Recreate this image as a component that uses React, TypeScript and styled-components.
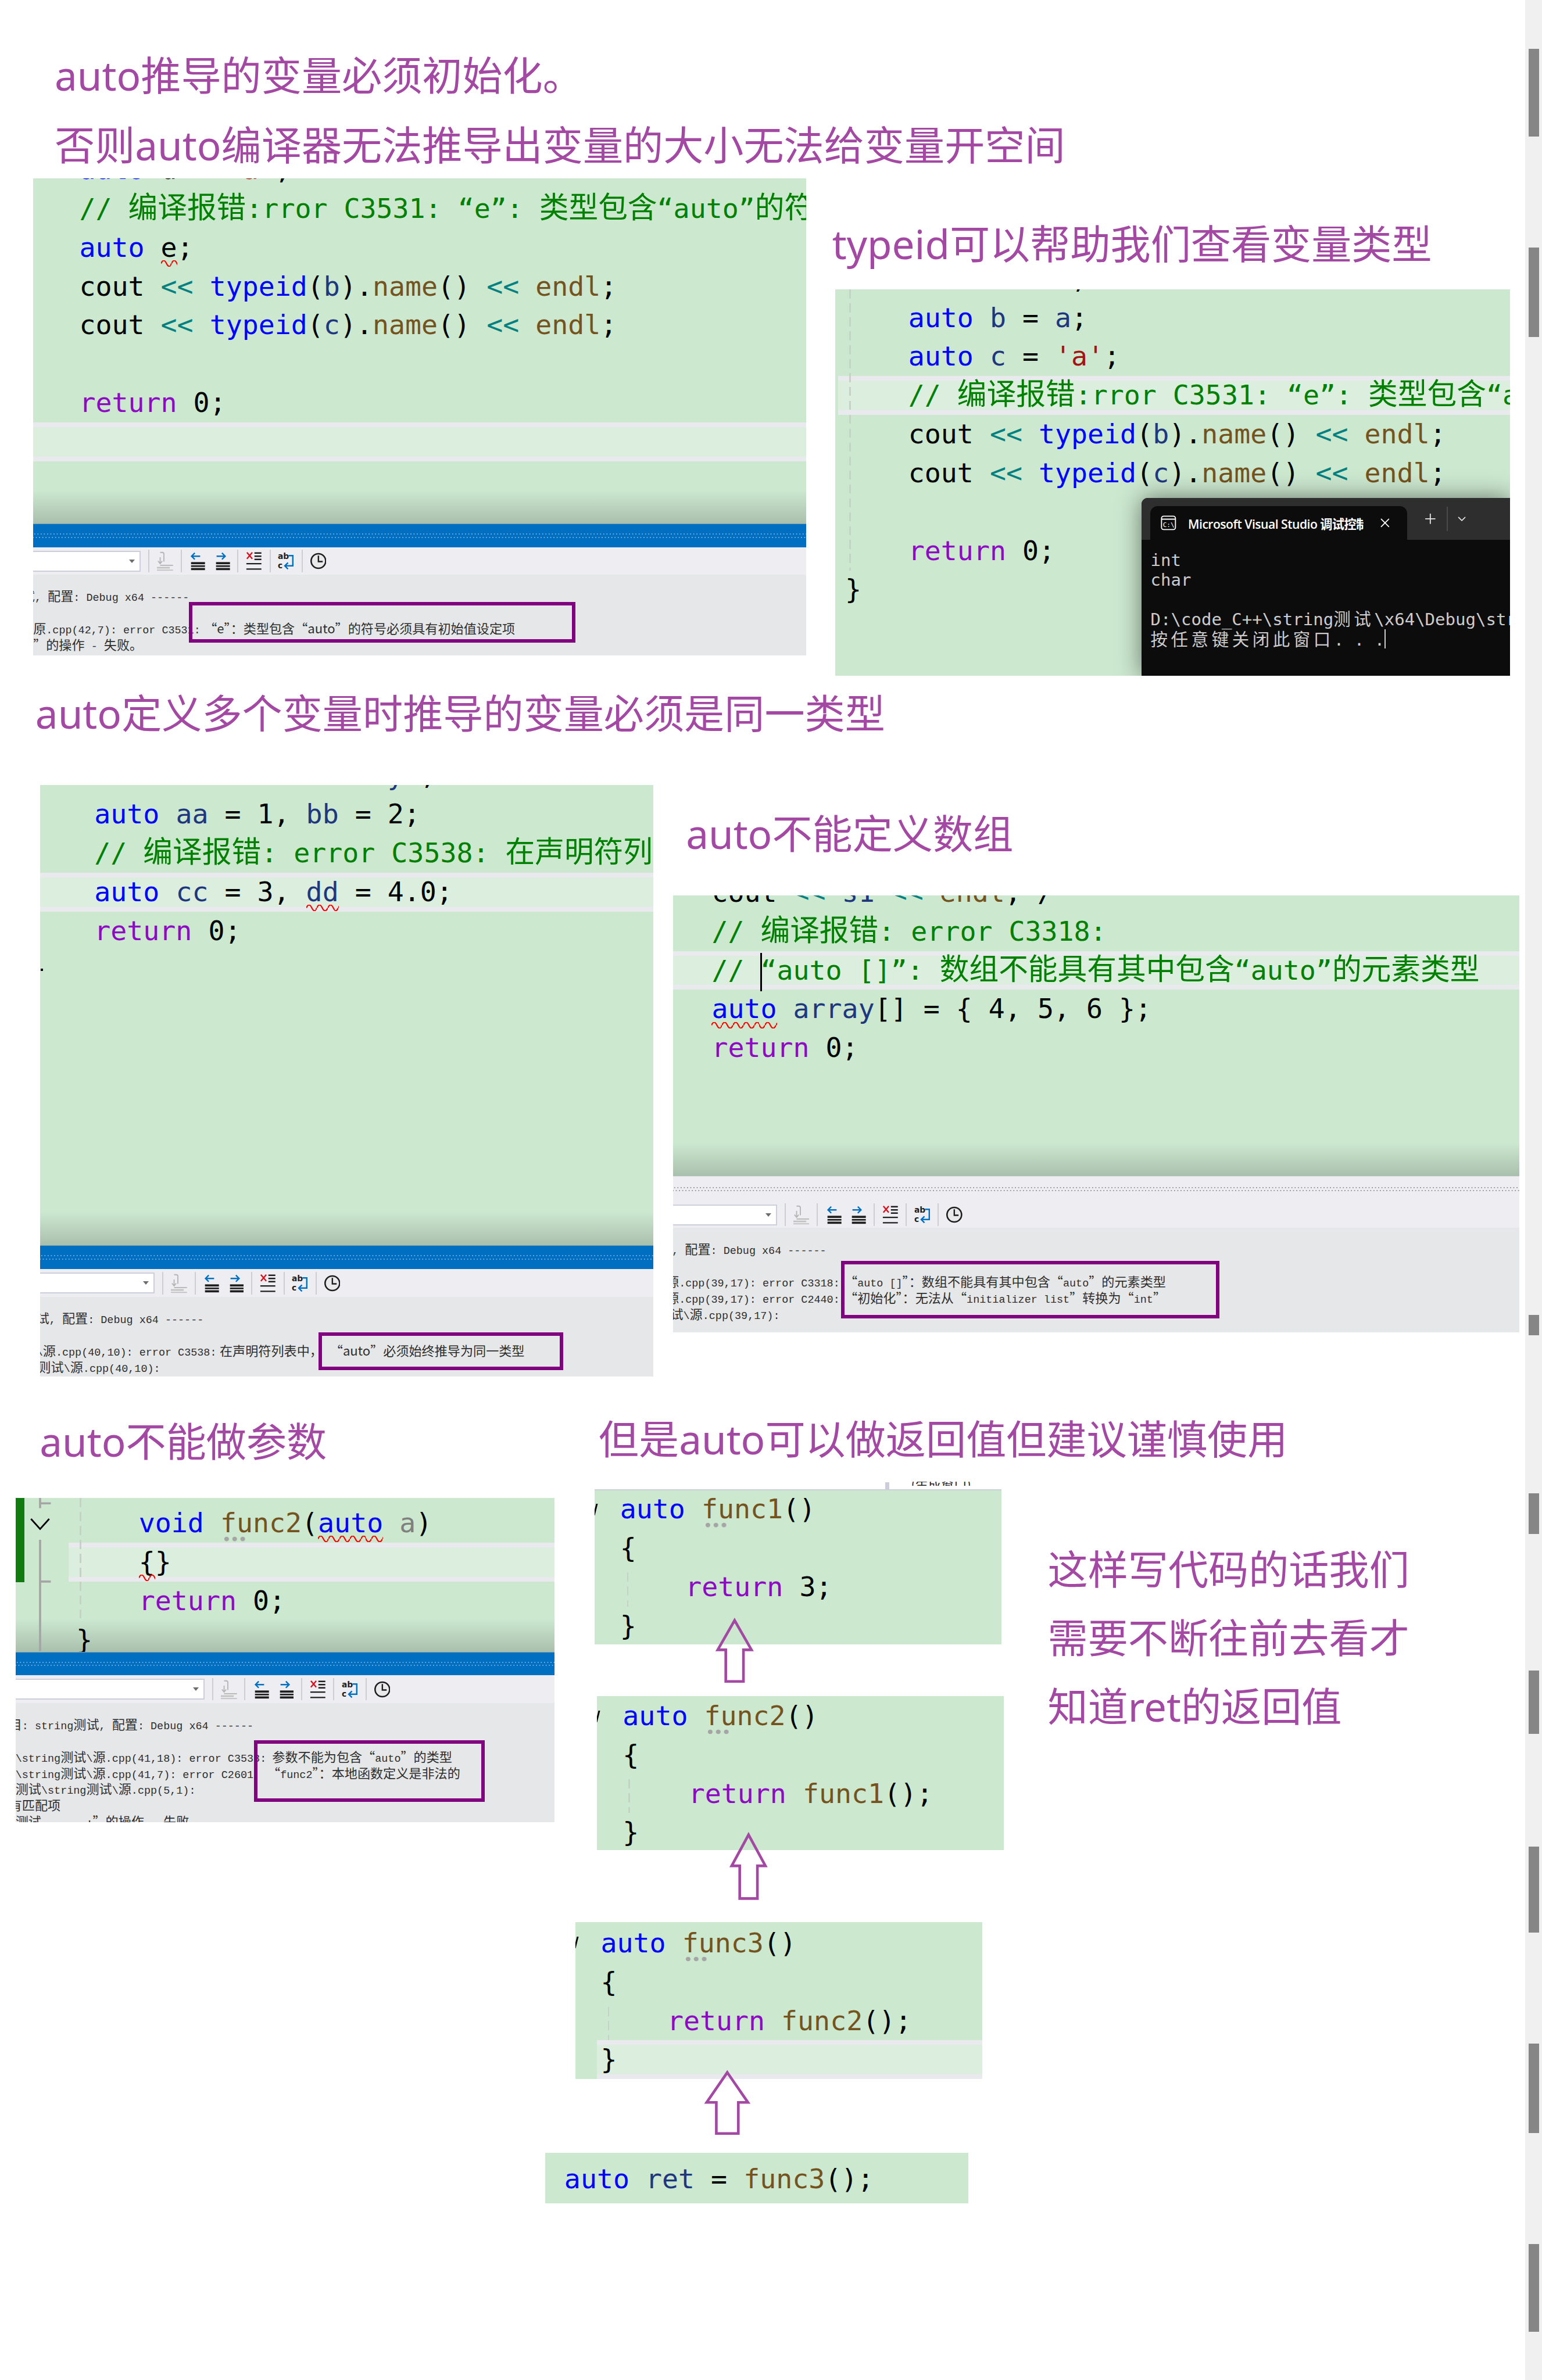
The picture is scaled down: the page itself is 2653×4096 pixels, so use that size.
import React from 'react'
import styled, {createGlobalStyle} from 'styled-components'
import {X, Plus, ChevronDown} from 'lucide-react'

const GlobalStyle = createGlobalStyle`
  html, body {
    margin: 0;
    padding: 0;
    background: #fff;
    overflow: hidden;
  }
`

const PURPLE = '#a349a4'
const EYE_GREEN = '#cce8cf'

const WAVE = encodeURIComponent(
  '<svg xmlns="http://www.w3.org/2000/svg" width="20" height="12"><path d="M0 6Q5 -5 10 6T20 6" fill="none" stroke="#f00" stroke-width="2.4"/></svg>',
)

// everything below is in reference pixels, the zoom brings it down to the window
const Page = styled.div`
  zoom: 0.922;
  width: 2877.5px;
  height: 4442.5px;
  display: flex;
  overflow: hidden;
  background: #fff;
`

const Content = styled.main`
  flex: 1;
  min-width: 0;
`

const Scrollbar = styled.aside`
  width: 32px;
  flex: none;
  background: #f0f0f0;
  padding-left: 7px;
  box-sizing: border-box;
`

const Thumb = styled.div<{$gap: number; $h: number}>`
  width: 19px;
  height: ${p => p.$h}px;
  margin-top: ${p => p.$gap}px;
  background: #868686;
`

const Row = styled.section<{$h: number; $cols: string}>`
  display: grid;
  grid-template-columns: ${p => p.$cols};
  height: ${p => p.$h}px;
`

const Col = styled.div`
  position: relative;
  min-width: 0;
`

const Title = styled.h2<{$top: number; $left: number}>`
  margin: ${p => p.$top}px 0 0 ${p => p.$left}px;
  height: 100px;
  line-height: 100px;
  font-family: 'Noto Sans', 'Noto Sans CJK SC', sans-serif;
  font-weight: 400;
  font-size: 75px;
  color: ${PURPLE};
  white-space: nowrap;
`

const Note = styled.div`
  margin: 244px 0 0 55px;
  font-family: 'Noto Sans', 'Noto Sans CJK SC', sans-serif;
  font-size: 75px;
  line-height: 128px;
  color: ${PURPLE};
  white-space: nowrap;
`

const Shot = styled.figure<{$w: number; $h: number; $top: number; $left: number}>`
  position: relative;
  display: flex;
  flex-direction: column;
  width: ${p => p.$w}px;
  height: ${p => p.$h}px;
  margin: ${p => p.$top}px 0 0 ${p => p.$left}px;
  overflow: hidden;
  background: ${EYE_GREEN};
`

const TopRule = styled.div`
  height: 4px;
  margin-top: -2px;
  background: #cccedb;
  flex: none;
`

const Editor = styled.div<{$fade?: boolean}>`
  flex: 1;
  min-height: 0;
  overflow: hidden;
  background: ${p =>
    p.$fade
      ? `linear-gradient(to bottom, ${EYE_GREEN} calc(100% - 62px), #a9bfad 100%)`
      : EYE_GREEN};
`

const Code = styled.div<{$offset: number}>`
  margin-top: ${p => p.$offset}px;
  font-family: 'DejaVu Sans Mono', 'Noto Sans CJK SC', monospace;
  font-size: 50.5px;
  color: #000;
`

const Line = styled.div<{$x: number; $band?: number}>`
  height: 72.5px;
  line-height: 72.5px;
  white-space: pre;
  margin-left: ${p => p.$band ?? 0}px;
  padding-left: ${p => p.$x - (p.$band ?? 0) - 2}px;
  ${p =>
    p.$band !== undefined
      ? `background: #dceedd;
         box-shadow: inset 0 9px 0 #e8eaee, inset 0 -9px 0 #e8eaee;`
      : ''}
`

const Kw = styled.span`color: #0000ff;`
const Ctl = styled.span`color: #8f08c4;`
const Fn = styled.span`color: #74531f;`
const Cm = styled.span`color: #008000;`
const Vr = styled.span`color: #1f377f;`
const Op = styled.span`color: #008080;`
const Str = styled.span`color: #a31515;`
const Param = styled.span`color: #808080;`
const Zh = styled.span`
  font-family: 'Noto Sans CJK SC', sans-serif;
  font-size: 55px;
  line-height: 0;
`

const Wavy = styled.span`
  position: relative;
  &::after {
    content: '';
    position: absolute;
    left: 0;
    right: 0;
    bottom: -7px;
    height: 12px;
    background: url("data:image/svg+xml,${WAVE}") repeat-x 0 0;
  }
`

const Hinted = styled.span`
  position: relative;
  &::after {
    content: '';
    position: absolute;
    left: 4px;
    bottom: -6px;
    width: 45px;
    height: 10px;
    background: radial-gradient(circle, #a5a5a5 4px, transparent 4.6px) 0 0 / 15px 10px;
  }
`

const Caret = styled.span`
  display: inline-block;
  width: 3px;
  height: 72px;
  margin-right: -3px;
  vertical-align: middle;
  background: #000;
`

const Guide = styled.div<{$x: number; $y: number; $h: number}>`
  position: absolute;
  left: ${p => p.$x}px;
  top: ${p => p.$y}px;
  width: 3px;
  height: ${p => p.$h}px;
  background: repeating-linear-gradient(to bottom, #c9d0ca 0 17px, transparent 17px 26px);
`

const Tick = styled.i`
  position: absolute;
  left: 1px;
  top: 343px;
  width: 4px;
  height: 4px;
  background: #000;
`

const Notch = styled.i<{$y: number}>`
  position: absolute;
  left: 0;
  top: ${p => p.$y}px;
  width: 3px;
  height: 22px;
  background: #000;
  transform: skewX(-14deg);
`

const ChangeBar = styled.i`
  position: absolute;
  left: 0;
  top: 0;
  width: 17px;
  height: 157px;
  background: #107c10;
`

const GutterArt = styled.svg`
  position: absolute;
  left: 20px;
  top: 0;
`

const StatusBar = styled.div<{$h: number; $light?: boolean}>`
  --dot: ${p => (p.$light ? '#9a9aa0' : '#6aa9dc')};
  flex: none;
  height: ${p => p.$h}px;
  background-color: ${p => (p.$light ? '#eeeef2' : '#006fc1')};
  background-image: radial-gradient(circle, var(--dot) 1px, transparent 1.5px),
    radial-gradient(circle, var(--dot) 1px, transparent 1.5px);
  background-size: 6px 6px;
  background-position: 0 calc(50% - 3px), 3px calc(50% + 3px);
  background-repeat: repeat-x;
  border-top: 2px solid ${p => (p.$light ? '#dcdce2' : '#7fa3a8')};
  box-sizing: border-box;
`

const Toolbar = styled.div<{$h: number}>`
  flex: none;
  height: ${p => p.$h}px;
  display: flex;
  align-items: center;
  background: #eeeef2;
`

const Drop = styled.div<{$w: number}>`
  flex: none;
  position: relative;
  width: ${p => p.$w}px;
  height: 39px;
  box-sizing: border-box;
  background: #fff;
  border: 3px solid #cccedb;
  border-left: 0;
  &::after {
    content: '';
    position: absolute;
    right: 9px;
    top: 14px;
    border-style: solid;
    border-width: 7px 6px 0;
    border-color: #6d6d6d transparent transparent;
  }
`

const ToolSep = styled.i`
  flex: none;
  width: 2px;
  height: 42px;
  margin: 0 14px;
  background: #ccced6;
`

const ToolIcon = styled.svg<{$gap?: number}>`
  flex: none;
  width: 30px;
  height: 38px;
  margin-left: ${p => p.$gap ?? 0}px;
`

const Output = styled.div<{$h: number}>`
  flex: none;
  height: ${p => p.$h}px;
  padding-top: 29px;
  box-sizing: border-box;
  overflow: hidden;
  background: #e6e7e9;
  font-family: 'Liberation Mono', 'Noto Sans CJK SC', monospace;
  font-size: 20px;
  color: #2e2e2e;
`

const OutLine = styled.div<{$x?: number}>`
  height: 30.3px;
  line-height: 30.3px;
  white-space: pre;
  margin-left: ${p => p.$x ?? 0}px;
`

const OutZh = styled.span`
  font-size: 24px;
  line-height: 0;
  font-family: 'Noto Sans CJK SC', sans-serif;
  font-weight: 400;
`

const Cell = styled.span<{$w: number}>`
  display: inline-block;
  width: ${p => p.$w}px;
`

const RedBox = styled.div<{$l: number; $t: number; $w: number; $h: number}>`
  position: absolute;
  left: ${p => p.$l}px;
  top: ${p => p.$t}px;
  width: ${p => p.$w}px;
  height: ${p => p.$h}px;
  box-sizing: border-box;
  border: 7px solid #800080;
`

const Terminal = styled.div`
  position: absolute;
  right: 0;
  bottom: 0;
  width: 688px;
  height: 332px;
  border-radius: 12px 0 0 0;
  background: #0c0c0c;
  box-shadow: 0 0 44px rgba(0, 0, 0, 0.5);
  overflow: hidden;
`

const TermBar = styled.div`
  height: 79px;
  display: flex;
  align-items: flex-end;
  padding-left: 16px;
  box-sizing: border-box;
  background: #2e2e2e;
`

const TermTab = styled.div`
  flex: none;
  width: 480px;
  height: 63px;
  display: flex;
  align-items: center;
  padding-left: 20px;
  box-sizing: border-box;
  border-radius: 14px 14px 0 0;
  background: #0c0c0c;
  color: #fff;
`

const TabLabel = styled.span`
  width: 327px;
  margin-left: 22px;
  overflow: hidden;
  white-space: nowrap;
  font-family: 'Open Sans', 'Noto Sans CJK SC', sans-serif;
  font-size: 23px;
  font-weight: 600;
  letter-spacing: -0.6px;
`

const TabClose = styled.span`
  display: flex;
  margin-left: 26px;
`

const TermAction = styled.span<{$gap: number}>`
  display: flex;
  align-self: center;
  margin-left: ${p => p.$gap}px;
  color: #e6e6e6;
`

const TermDivider = styled.i`
  align-self: center;
  width: 2px;
  height: 46px;
  margin-left: 16px;
  background: #4a4a4a;
`

const TermBody = styled.pre`
  margin: 0;
  padding: 19px 0 0 17px;
  font-family: 'DejaVu Sans Mono', 'Noto Sans CJK SC', monospace;
  font-size: 31.5px;
  line-height: 37px;
  color: #cccccc;
  overflow: hidden;
  white-space: pre;
`

const TermZh = styled.span`
  font-family: 'Noto Sans CJK SC', sans-serif;
  font-size: 32px;
  line-height: 0;
  letter-spacing: 6px;
`

const TermCursor = styled.span`
  display: inline-block;
  width: 2px;
  height: 36px;
  vertical-align: -6px;
  background: #ccc;
`

const FlowArrow = styled.svg<{$l: number; $t: number}>`
  position: absolute;
  left: ${p => p.$l}px;
  top: ${p => p.$t}px;
  overflow: visible;
`

const ColumnBar = styled.i`
  position: absolute;
  left: 652px;
  top: 147px;
  width: 7px;
  height: 14px;
  background: #cccedb;
`

const CutOff = styled.div`
  position: absolute;
  left: 700px;
  top: 146px;
  width: 115px;
  height: 7px;
  overflow: hidden;
  font-family: 'Noto Sans CJK SC', sans-serif;
  font-size: 24px;
  line-height: 8px;
  color: #222;
  white-space: nowrap;
`

const Shift = () => <Op>{'<<'}</Op>

const thumbs: [number, number][] = [
  [91, 255],
  [462, 629],
  [2455, 2492],
  [2787, 2863],
  [3118, 3237],
  [3447, 3608],
  [3815, 3982],
  [4189, 4353],
]

const UndoIcon = () => (
  <ToolIcon viewBox="0 0 30 38" $gap={0}>
    <path d="M13 3h4a3 3 0 0 1 3 3v14" fill="none" stroke="#b5b5b5" strokeWidth="2" transform="translate(-7 0)" />
    <path d="M6 12v11M2 19l4 5 4-5" fill="none" stroke="#b5b5b5" strokeWidth="2" />
    <rect x="6" y="26" width="24" height="2" fill="#b5b5b5" />
    <rect x="0" y="30" width="24" height="3" fill="#c2c2c2" />
    <rect x="0" y="35" width="30" height="2" fill="#c2c2c2" />
  </ToolIcon>
)

const OutdentIcon = ({flip = false, gap = 0}: {flip?: boolean; gap?: number}) => (
  <ToolIcon viewBox="0 0 30 38" $gap={gap}>
    <path
      d={flip ? 'M5 10h16M15 4l6 6-6 6' : 'M21 10H5M11 4l-6 6 6 6'}
      fill="none"
      stroke="#0070c0"
      strokeWidth="2.6"
    />
    <rect x="4" y="21" width="26" height="4" fill="#1e1e1e" />
    <rect x="4" y="27" width="26" height="3" fill="#1e1e1e" />
    <rect x="4" y="32" width="26" height="4" fill="#1e1e1e" />
  </ToolIcon>
)

const ClearIcon = () => (
  <ToolIcon viewBox="0 0 30 38">
    <path d="M2 3l10 12M12 3L2 15" stroke="#d4141e" strokeWidth="2.6" fill="none" />
    <path d="M16 4h13M16 10h13M16 16h13M1 24h28M1 34h28" stroke="#1e1e1e" strokeWidth="2.6" fill="none" />
  </ToolIcon>
)

const WrapIcon = () => (
  <ToolIcon viewBox="0 0 30 38">
    <text x="0" y="15" fontFamily="'DejaVu Sans', sans-serif" fontWeight="700" fontSize="15" fill="#1e1e1e">
      ab
    </text>
    <text x="0" y="32" fontFamily="'DejaVu Sans', sans-serif" fontWeight="700" fontSize="15" fill="#1e1e1e">
      c
    </text>
    <path d="M20 9h8v19H13M19 22l-6 6 6 6" fill="none" stroke="#0070c0" strokeWidth="2.6" />
  </ToolIcon>
)

const ClockIcon = () => (
  <ToolIcon viewBox="0 0 30 38">
    <circle cx="15" cy="19" r="13.6" fill="#e9e9ec" stroke="#1e1e1e" strokeWidth="2.8" />
    <path d="M15 9v11h8" fill="none" stroke="#1e1e1e" strokeWidth="2.6" />
  </ToolIcon>
)

const OutputTools = ({h, drop}: {h: number; drop: number}) => (
  <Toolbar $h={h}>
    <Drop $w={drop} />
    <ToolSep />
    <UndoIcon />
    <ToolSep />
    <OutdentIcon />
    <OutdentIcon flip gap={16} />
    <ToolSep />
    <ClearIcon />
    <ToolSep />
    <WrapIcon />
    <ToolSep />
    <ClockIcon />
  </Toolbar>
)

const Arrow = ({l, t, w, h, inset, head}: {l: number; t: number; w: number; h: number; inset: number; head: number}) => (
  <FlowArrow $l={l} $t={t} width={w} height={h} viewBox={`0 0 ${w} ${h}`}>
    <path
      d={`M${w / 2} 4L${w - 2} ${head}H${w - inset}V${h - 2}H${inset}V${head}H2Z`}
      fill="none"
      stroke={PURPLE}
      strokeWidth="5"
    />
  </FlowArrow>
)

const ConsoleGlyph = () => (
  <svg width="29" height="28" viewBox="0 0 29 28">
    <rect x="1.5" y="1.5" width="26" height="25" rx="4" fill="none" stroke="#fff" strokeWidth="2" />
    <path d="M2 7h25" stroke="#fff" strokeWidth="2" />
    <text x="4" y="22" fontFamily="'DejaVu Sans Mono', monospace" fontSize="12" fill="#fff">
      C:\
    </text>
  </svg>
)

function UninitShot() {
  return (
    <Shot $w={1442} $h={891} $top={13} $left={62}>
      <Editor $fade>
        <Code $offset={-52}>
          <Line $x={88}><Kw>auto</Kw> d = <Str>'a'</Str>;</Line>
          <Line $x={88}><Cm>// <Zh>编译报错</Zh>:rror C3531: “e”: <Zh>类型包含</Zh>“auto”<Zh>的符号必须具有初始值设定项</Zh></Cm></Line>
          <Line $x={88}><Kw>auto</Kw> <Wavy>e</Wavy>;</Line>
          <Line $x={88}>cout <Shift /> <Kw>typeid</Kw>(<Vr>b</Vr>).<Fn>name</Fn>() <Shift /> <Fn>endl</Fn>;</Line>
          <Line $x={88}>cout <Shift /> <Kw>typeid</Kw>(<Vr>c</Vr>).<Fn>name</Fn>() <Shift /> <Fn>endl</Fn>;</Line>
          <Line $x={88} />
          <Line $x={88}><Ctl>return</Ctl> 0;</Line>
          <Line $x={0} $band={0} />
        </Code>
      </Editor>
      <StatusBar $h={45} />
      <OutputTools h={51} drop={201} />
      <Output $h={151}>
        <OutLine $x={-21}><OutZh>试</OutZh>, <OutZh>配置</OutZh>: Debug x64 ------</OutLine>
        <OutLine />
        <OutLine><Cell $w={319}><OutZh>原</OutZh>.cpp(42,7): error C3531:</Cell><OutZh>“e”：类型包含“auto”的符号必须具有初始值设定项</OutZh></OutLine>
        <OutLine><OutZh>”的操作</OutZh> - <OutZh>失败。</OutZh></OutLine>
      </Output>
      <RedBox $l={290} $t={791} $w={722} $h={76} />
    </Shot>
  )
}

function TypeidShot() {
  return (
    <Shot $w={1259} $h={721} $top={35} $left={19}>
      <Editor>
        <Code $offset={-55.5}>
          <Line $x={138}><Kw>int</Kw> <Vr>a</Vr> = 10;</Line>
          <Line $x={138}><Kw>auto</Kw> <Vr>b</Vr> = <Vr>a</Vr>;</Line>
          <Line $x={138}><Kw>auto</Kw> <Vr>c</Vr> = <Str>'a'</Str>;</Line>
          <Line $x={138} $band={5}><Cm>// <Zh>编译报错</Zh>:rror C3531: “e”: <Zh>类型包含</Zh>“auto”<Zh>的符号必须具有初始值设定项</Zh></Cm></Line>
          <Line $x={138}>cout <Shift /> <Kw>typeid</Kw>(<Vr>b</Vr>).<Fn>name</Fn>() <Shift /> <Fn>endl</Fn>;</Line>
          <Line $x={138}>cout <Shift /> <Kw>typeid</Kw>(<Vr>c</Vr>).<Fn>name</Fn>() <Shift /> <Fn>endl</Fn>;</Line>
          <Line $x={138} />
          <Line $x={138}><Ctl>return</Ctl> 0;</Line>
          <Line $x={20}>{'}'}</Line>
        </Code>
      </Editor>
      <Guide $x={26} $y={0} $h={525} />
      <Terminal>
        <TermBar>
          <TermTab>
            <ConsoleGlyph />
            <TabLabel>Microsoft Visual Studio 调试控制台</TabLabel>
            <TabClose><X size={28} strokeWidth={1.6} /></TabClose>
          </TermTab>
          <TermAction $gap={28}><Plus size={30} strokeWidth={1.6} /></TermAction>
          <TermDivider />
          <TermAction $gap={14}><ChevronDown size={24} strokeWidth={1.8} /></TermAction>
        </TermBar>
        <TermBody>{'int\nchar\n\nD:\\code_C++\\string'}<TermZh>测试</TermZh>{'\\x64\\Debug\\string测试.exe\n'}<TermZh>按任意键关闭此窗口</TermZh>{'. . .'}<TermCursor /></TermBody>
      </Terminal>
    </Shot>
  )
}

function SameTypeShot() {
  return (
    <Shot $w={1144} $h={1104} $top={84} $left={75}>
      <Editor $fade>
        <Code $offset={-53.5}>
          <Line $x={103}>cout <Shift /> <Vr>a</Vr> <Shift /> <Vr>b</Vr> <Shift /> <Vr>y</Vr> ;</Line>
          <Line $x={103}><Kw>auto</Kw> <Vr>aa</Vr> = 1, <Vr>bb</Vr> = 2;</Line>
          <Line $x={103}><Cm>// <Zh>编译报错</Zh>: error C3538: <Zh>在声明符列表中</Zh></Cm></Line>
          <Line $x={103} $band={0}><Kw>auto</Kw> <Vr>cc</Vr> = 3, <Wavy><Vr>dd</Vr></Wavy> = 4.0;</Line>
          <Line $x={103}><Ctl>return</Ctl> 0;</Line>
        </Code>
      </Editor>
      <Tick />
      <StatusBar $h={45} />
      <OutputTools h={52} drop={214} />
      <Output $h={148}>
        <OutLine $x={-7}><OutZh>试</OutZh>, <OutZh>配置</OutZh>: Debug x64 ------</OutLine>
        <OutLine />
        <OutLine $x={-7}><Cell $w={342}>\<OutZh>源</OutZh>.cpp(40,10): error C3538:</Cell><OutZh>在声明符列表中，</OutZh><Cell $w={14} /><OutZh>“auto”必须始终推导为同一类型</OutZh></OutLine>
        <OutLine $x={-4}><OutZh>则试</OutZh>\<OutZh>源</OutZh>.cpp(40,10):</OutLine>
      </Output>
      <RedBox $l={519} $t={1022} $w={457} $h={70} />
    </Shot>
  )
}

function ArrayShot() {
  return (
    <Shot $w={1579} $h={816} $top={66} $left={16}>
      <Editor $fade>
        <Code $offset={-41}>
          <Line $x={74}>cout <Shift /> <Vr>s1</Vr> <Shift /> <Fn>endl</Fn>; /</Line>
          <Line $x={74}><Cm>// <Zh>编译报错</Zh>: error C3318:</Cm></Line>
          <Line $x={74} $band={0}><Cm>// <Caret />“auto []”: <Zh>数组不能具有其中包含</Zh>“auto”<Zh>的元素类型</Zh></Cm></Line>
          <Line $x={74}><Wavy><Kw>auto</Kw></Wavy> <Vr>array</Vr>[] = {'{'} 4, 5, 6 {'}'};</Line>
          <Line $x={74}><Ctl>return</Ctl> 0;</Line>
        </Code>
      </Editor>
      <StatusBar $h={48} $light />
      <OutputTools h={49} drop={194} />
      <Output $h={195}>
        <OutLine $x={-26}><OutZh>试</OutZh>, <OutZh>配置</OutZh>: Debug x64 ------</OutLine>
        <OutLine />
        <OutLine $x={-13}><Cell $w={333}><OutZh>源</OutZh>.cpp(39,17): error C3318:</Cell><OutZh>“</OutZh>auto []<OutZh>”：数组不能具有其中包含“</OutZh>auto<OutZh>”的元素类型</OutZh></OutLine>
        <OutLine $x={-13}><Cell $w={333}><OutZh>源</OutZh>.cpp(39,17): error C2440:</Cell><OutZh>“初始化”：无法从“</OutZh>initializer list<OutZh>”转换为“</OutZh>int<OutZh>”</OutZh></OutLine>
        <OutLine $x={-5}><OutZh>试</OutZh>\<OutZh>源</OutZh>.cpp(39,17):</OutLine>
      </Output>
      <RedBox $l={313} $t={683} $w={707} $h={107} />
    </Shot>
  )
}

function ParamShot() {
  return (
    <Shot $w={1006} $h={605} $top={56} $left={29}>
      <Editor $fade>
        <Code $offset={11}>
          <Line $x={232}><Kw>void</Kw> <Hinted><Fn>func2</Fn></Hinted>(<Wavy><Kw>auto</Kw></Wavy> <Param>a</Param>)</Line>
          <Line $x={232} $band={99}><Wavy>{'{'}</Wavy>{'}'}</Line>
          <Line $x={232}><Ctl>return</Ctl> 0;</Line>
          <Line $x={115}>{'}'}</Line>
        </Code>
      </Editor>
      <ChangeBar />
      <GutterArt width="60" height="290" viewBox="0 0 60 290">
        <path d="M26 0v19M26 10h20M26 78v208M26 156h20" fill="none" stroke="#a5a5a5" strokeWidth="4" />
        <path d="M9 39l17 19 17-19" fill="none" stroke="#000" strokeWidth="3" />
      </GutterArt>
      <Guide $x={120} $y={0} $h={229} />
      <StatusBar $h={44} />
      <OutputTools h={52} drop={353} />
      <Output $h={222}>
        <OutLine $x={-12}><OutZh>目</OutZh>: string<OutZh>测试</OutZh>, <OutZh>配置</OutZh>: Debug x64 ------</OutLine>
        <OutLine />
        <OutLine><Cell $w={479}>\string<OutZh>测试</OutZh>\<OutZh>源</OutZh>.cpp(41,18): error C3533:</Cell><OutZh>参数不能为包含“</OutZh>auto<OutZh>”的类型</OutZh></OutLine>
        <OutLine><Cell $w={470}>\string<OutZh>测试</OutZh>\<OutZh>源</OutZh>.cpp(41,7): error C2601:</Cell><OutZh>“</OutZh>func2<OutZh>”：本地函数定义是非法的</OutZh></OutLine>
        <OutLine><OutZh>测试</OutZh>\string<OutZh>测试</OutZh>\<OutZh>源</OutZh>.cpp(5,1):</OutLine>
        <OutLine $x={-12}><OutZh>有匹配项</OutZh></OutLine>
        <OutLine><OutZh>测试</OutZh> ......;<OutZh>”的操作</OutZh> - <OutZh>失败。</OutZh></OutLine>
      </Output>
      <RedBox $l={445} $t={452} $w={431} $h={115} />
    </Shot>
  )
}

export default function App() {
  return (
    <Page>
      <GlobalStyle />
      <Content>
        <Row $h={1275} $cols="1540px 1fr">
          <Col>
            <Title $top={90} $left={102}>auto推导的变量必须初始化。</Title>
            <Title $top={30} $left={102}>否则auto编译器无法推导出变量的大小无法给变量开空间</Title>
            <UninitShot />
          </Col>
          <Col>
            <Title $top={405} $left={13}>typeid可以帮助我们查看变量类型</Title>
            <TypeidShot />
          </Col>
        </Row>

        <Row $h={1345} $cols="1240px 1fr">
          <Col>
            <Title $top={6} $left={66}>auto定义多个变量时推导的变量必须是同一类型</Title>
            <SameTypeShot />
          </Col>
          <Col>
            <Title $top={230} $left={40}>auto不能定义数组</Title>
            <ArrayShot />
          </Col>
        </Row>

        <Row $h={1822} $cols="1000px 900px 1fr">
          <Col>
            <Title $top={20} $left={74}>auto不能做参数</Title>
            <ParamShot />
          </Col>
          <Col>
            <Title $top={16} $left={117}>但是auto可以做返回值但建议谨慎使用</Title>
            <Shot $w={759} $h={289} $top={44} $left={110}>
              <TopRule />
              <Editor>
                <Code $offset={-1}>
                  <Line $x={49}><Kw>auto</Kw> <Hinted><Fn>func1</Fn></Hinted>()</Line>
                  <Line $x={49}>{'{'}</Line>
                  <Line $x={171}><Ctl>return</Ctl> 3;</Line>
                  <Line $x={49}>{'}'}</Line>
                </Code>
              </Editor>
              <Guide $x={60} $y={155} $h={64} />
              <Notch $y={27} />
            </Shot>
            <Shot $w={759} $h={287} $top={97} $left={114}>
              <Editor>
                <Code $offset={1}>
                  <Line $x={50}><Kw>auto</Kw> <Hinted><Fn>func2</Fn></Hinted>()</Line>
                  <Line $x={50}>{'{'}</Line>
                  <Line $x={173}><Ctl>return</Ctl> <Fn>func1</Fn>();</Line>
                  <Line $x={50}>{'}'}</Line>
                </Code>
              </Editor>
              <Guide $x={59} $y={155} $h={63} />
              <Notch $y={27} />
            </Shot>
            <Shot $w={759} $h={293} $top={135} $left={74}>
              <Editor>
                <Code $offset={3}>
                  <Line $x={49}><Kw>auto</Kw> <Hinted><Fn>func3</Fn></Hinted>()</Line>
                  <Line $x={49}>{'{'}</Line>
                  <Line $x={173}><Ctl>return</Ctl> <Fn>func2</Fn>();</Line>
                  <Line $x={49} $band={40}>{'}'}</Line>
                </Code>
              </Editor>
              <Guide $x={60} $y={158} $h={62} />
              <Notch $y={27} />
            </Shot>
            <Shot $w={790} $h={94} $top={138} $left={17}>
              <Code $offset={13}>
                <Line $x={38}><Kw>auto</Kw> <Vr>ret</Vr> = <Fn>func3</Fn>();</Line>
              </Code>
            </Shot>
            <ColumnBar />
            <CutOff>(生成窗口)</CutOff>
            <Arrow l={337} t={401} w={67} h={120} inset={17} head={59} />
            <Arrow l={363} t={801} w={67} h={125} inset={17} head={62} />
            <Arrow l={317} t={1244} w={81} h={120} inset={20} head={60} />
          </Col>
          <Col>
            <Note>
              这样写代码的话我们
              <br />
              需要不断往前去看才
              <br />
              知道ret的返回值
            </Note>
          </Col>
        </Row>
      </Content>
      <Scrollbar>
        {thumbs.map(([top, bottom], i) => (
          <Thumb key={top} $gap={top - (i ? thumbs[i - 1][1] : 0)} $h={bottom - top} />
        ))}
      </Scrollbar>
    </Page>
  )
}
